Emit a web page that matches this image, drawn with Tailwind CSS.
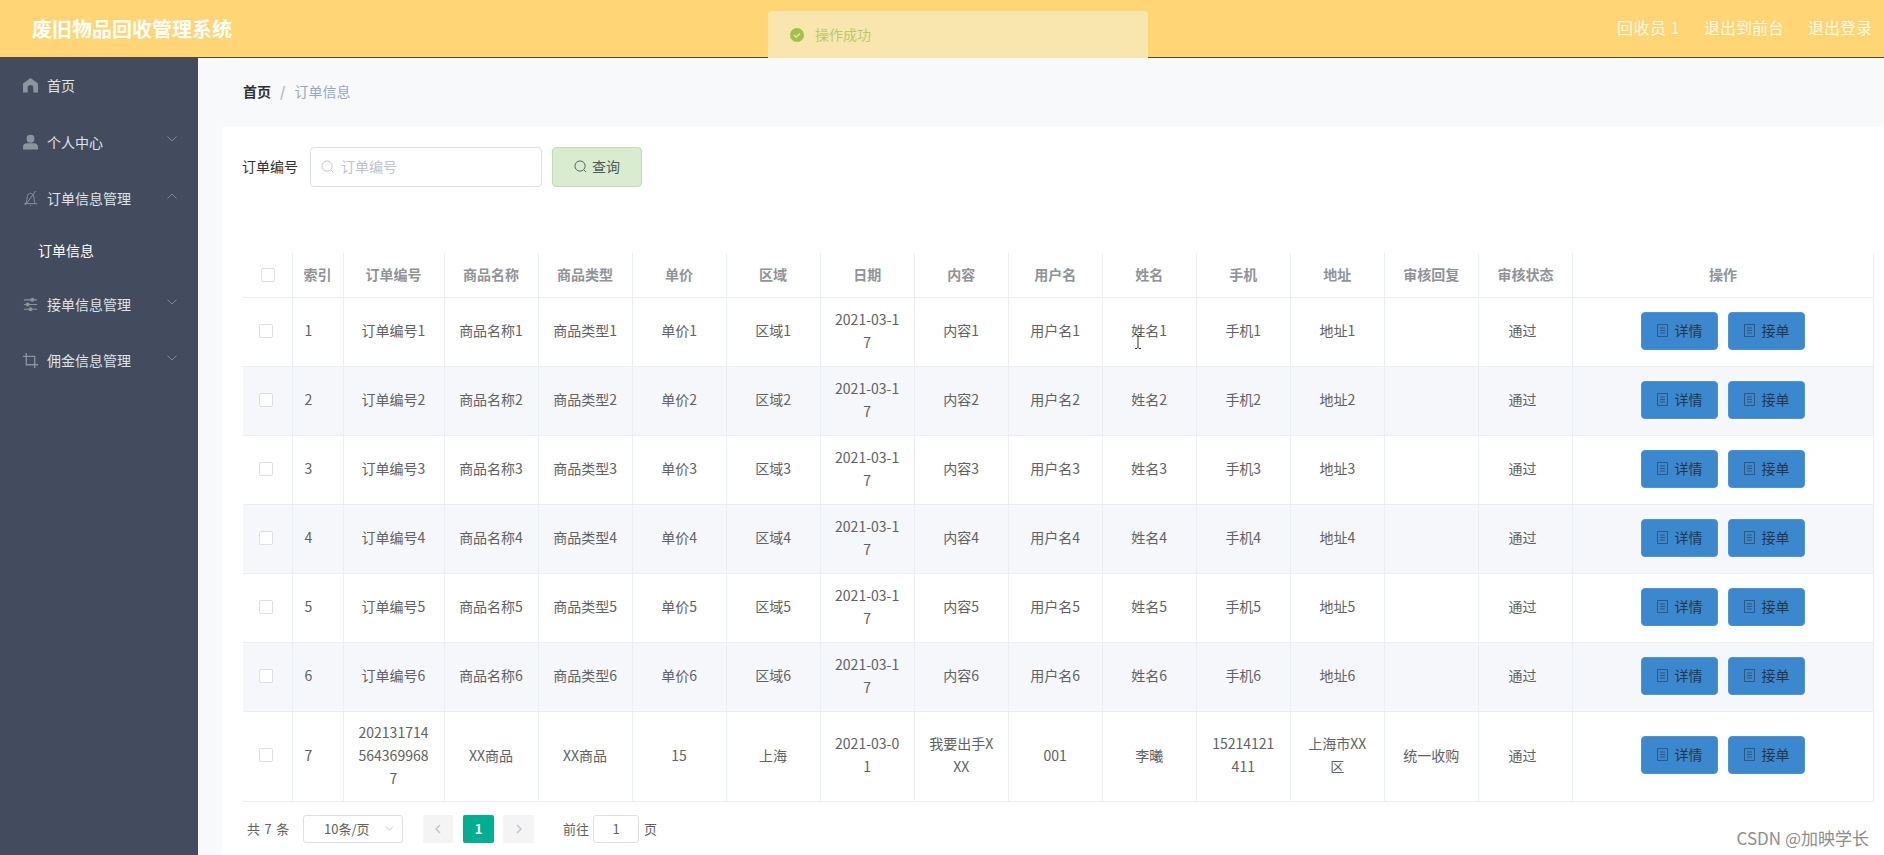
<!doctype html>
<html lang="zh">
<head>
<meta charset="utf-8" />
<title>废旧物品回收管理系统</title>
<script src="https://cdn.jsdelivr.net/npm/@tailwindcss/browser@4"></script>
</head>
<body class="w-[1884px] h-[855px] overflow-hidden relative bg-[#f8f9fb] font-['Noto_Sans_CJK_SC','Noto_Sans',sans-serif] text-[14px] text-[#606266]">
  <!-- top bar -->
  <header class="h-[58px] bg-[#ffd575] border-b border-[#5c4a26] flex items-center justify-between pl-[32px] pr-[12px]">
    <h1 class="text-[20px] font-bold text-white">废旧物品回收管理系统</h1>
    <div class="flex gap-[24px] text-[16px] text-[#fff8e6] pb-[4px]">
      <span class="tracking-[0.5px]">回收员 1</span>
      <span>退出到前台</span>
      <span>退出登录</span>
    </div>
  </header>

  <div class="flex h-[797px]">
    <!-- sidebar -->
    <aside class="w-[198px] shrink-0 bg-[#434c5e] text-[#dfe3e8]">
      <div class="h-[56px] flex items-center pl-[23px] pb-[2px]">
        <svg class="w-[15px] h-[16px] mr-[9px] text-[#8d939f]" viewBox="0 0 16 16" fill="currentColor"><path d="M8 .5 0 6.500V16h5v-5a3 3 0 0 1 6 0v5h5V6.500z"/></svg>
        <span>首页</span>
      </div>
      <div class="h-[57px] flex items-center pl-[23px] pb-[1px] relative">
        <svg class="w-[15px] h-[16px] mr-[9px] text-[#8d939f]" viewBox="0 0 16 16" fill="currentColor"><circle cx="8" cy="4.500" r="4.200"/><path d="M0 16v-3c0-2.500 2-3.800 4-3.800h8c2 0 4 1.300 4 3.800v3z"/></svg>
        <span>个人中心</span>
        <svg class="absolute left-[167px] top-[22px] w-[10px] h-[6px] text-[#7f8694]" viewBox="0 0 10 6" fill="none" stroke="currentColor"><path d="m.5.500 4.500 4.500 4.500-4.500"/></svg>
      </div>
      <div class="h-[56px] flex items-center pl-[23px] pb-[2px] relative">
        <svg class="w-[15px] h-[17px] mr-[9px] text-[#8d939f]" viewBox="0 0 16 17" fill="none" stroke="currentColor"><path d="M1 14h14M3 14c1-2 1-4 1.500-7C5 4 6.500 3 8 3s3 1 3.500 4c.5 3 .5 5 1.500 7M2.500 15.500 13.500.5M7.500 16h1"/></svg>
        <span>订单信息管理</span>
        <svg class="absolute left-[167px] top-[22px] w-[10px] h-[6px] text-[#7f8694]" viewBox="0 0 10 6" fill="none" stroke="currentColor"><path d="m.5 5.500 4.500-4.500 4.500 4.500"/></svg>
      </div>
      <div class="h-[50px] flex items-center pl-[38px] pb-[4px] text-white">订单信息</div>
      <div class="h-[56px] flex items-center pl-[23px] pb-[2px] relative">
        <svg class="w-[15px] h-[15px] mr-[9px] text-[#8d939f]" viewBox="0 0 16 16" fill="none" stroke="currentColor" stroke-width="1.200"><path d="M1 3h14M1 8h14M1 13h14"/><circle cx="10" cy="3" r="1.500" fill="currentColor"/><circle cx="5" cy="8" r="1.500" fill="currentColor"/><circle cx="8" cy="13" r="1.500" fill="currentColor"/></svg>
        <span>接单信息管理</span>
        <svg class="absolute left-[167px] top-[22px] w-[10px] h-[6px] text-[#7f8694]" viewBox="0 0 10 6" fill="none" stroke="currentColor"><path d="m.5.500 4.500 4.500 4.500-4.500"/></svg>
      </div>
      <div class="h-[56px] flex items-center pl-[23px] pb-[2px] relative">
        <svg class="w-[15px] h-[15px] mr-[9px] text-[#8d939f]" viewBox="0 0 16 16" fill="none" stroke="currentColor" stroke-width="1.400"><path d="M3.500 0v12.500H16M0 3.500h12.500V16"/></svg>
        <span>佣金信息管理</span>
        <svg class="absolute left-[167px] top-[22px] w-[10px] h-[6px] text-[#7f8694]" viewBox="0 0 10 6" fill="none" stroke="currentColor"><path d="m.5.500 4.500 4.500 4.500-4.500"/></svg>
      </div>
    </aside>

    <!-- content -->
    <main class="flex-1 flex flex-col pl-[24px]">
      <nav class="h-[69px] shrink-0 flex items-center pl-[21px] pb-[2px]">
        <span class="font-bold text-[#303133]">首页</span>
        <span class="mx-[9px] text-[#b4b9c2] font-bold">/</span>
        <span class="text-[#97a8be]">订单信息</span>
      </nav>
      <section class="flex-1 bg-white pl-[21px] pr-[10px] pt-[20px]">
        <form class="flex items-center h-[40px]">
          <label class="w-[67px] text-[#303133] pb-[2px] -ml-[1px] mr-[1px]">订单编号</label>
          <div class="w-[232px] h-[40px] border border-[#dcdfe6] rounded-[4px] flex items-center pl-[10px] pb-[2px] text-[#c0c4cc]">
            <svg class="w-[13px] h-[13px] mr-[7px]" viewBox="0 0 14 14" fill="none" stroke="currentColor"><circle cx="6.500" cy="6.500" r="5.500"/><path d="m10.500 10.500 2.500 2.500"/></svg>
            <span>订单编号</span>
          </div>
          <button type="button" class="ml-[10px] w-[90px] h-[40px] bg-[#d9ecd0] border border-[#c3dcb4] rounded-[4px] flex items-center justify-center gap-[5px] pb-[2px] text-[#4f5a58]">
            <svg class="w-[13px] h-[13px]" viewBox="0 0 14 14" fill="none" stroke="currentColor"><circle cx="6.500" cy="6.500" r="5.500"/><path d="m10.500 10.500 2.500 2.500"/></svg>
            <span>查询</span>
          </button>
        </form>

        <table class="mt-[66px] w-[1631px] table-fixed border-collapse text-center">
          <colgroup>
            <col class="w-[49px]" /><col class="w-[51px]" /><col class="w-[101px]" />
            <col /><col /><col /><col /><col /><col /><col /><col /><col /><col /><col /><col />
            <col class="w-[301px]" />
          </colgroup>
          <thead>
            <tr class="h-[44px] border-b border-[#ebeef5] text-[#909399] text-[14px]" id="head"></tr>
          </thead>
          <tbody id="rows"></tbody>
        </table>

        <div class="mt-[13px] flex items-center h-[28px] text-[13px]">
          <span class="ml-[4px] w-[56px] tracking-[0.8px]">共 7 条</span>
          <div class="w-[100px] h-[28px] border border-[#dcdfe6] rounded-[3px] flex items-center justify-between pl-[20px] pr-[8px]">
            <span>10条/页</span>
            <svg class="w-[9px] h-[5px] text-[#c0c4cc]" viewBox="0 0 10 6" fill="none" stroke="currentColor"><path d="m.5.500 4.500 4.500 4.500-4.500"/></svg>
          </div>
          <div class="ml-[20px] w-[30px] h-[28px] bg-[#f4f4f5] rounded-[2px] flex items-center justify-center">
            <svg class="w-[6px] h-[10px] text-[#c0c4cc]" viewBox="0 0 6 10" fill="none" stroke="currentColor" stroke-width="1.500"><path d="M5 1 1 5l4 4"/></svg>
          </div>
          <div class="ml-[10px] w-[31px] h-[28px] bg-[#00ae94] rounded-[2px] flex items-center justify-center text-white font-bold">1</div>
          <div class="ml-[9px] w-[31px] h-[28px] bg-[#f4f4f5] rounded-[2px] flex items-center justify-center">
            <svg class="w-[6px] h-[10px] text-[#c0c4cc]" viewBox="0 0 6 10" fill="none" stroke="currentColor" stroke-width="1.500"><path d="m1 1 4 4-4 4"/></svg>
          </div>
          <span class="ml-[29px] w-[30px]">前往</span>
          <div class="w-[46px] h-[28px] border border-[#dcdfe6] rounded-[3px] flex items-center justify-center">1</div>
          <span class="ml-[5px]">页</span>
        </div>
      </section>
    </main>
  </div>

  <!-- success toast -->
  <div class="absolute left-[768px] top-[11px] w-[380px] h-[47px] bg-[#f9e6ae] rounded-t-[4px] flex items-center pl-[22px] text-[#b9c86e]">
    <svg class="w-[14px] h-[14px] mr-[11px]" viewBox="0 0 14 14"><circle cx="7" cy="7" r="7" fill="#a3c04e"/><path d="m4 7 2.200 2.200L10 5.500" fill="none" stroke="#f9e6ae" stroke-width="1.300"/></svg>
    <span>操作成功</span>
  </div>

  <!-- text cursor in the capture -->
  <svg class="absolute left-[1134px] top-[334px] w-[8px] h-[15px] text-[#333]" viewBox="0 0 8 15" fill="none" stroke="currentColor"><path d="M1 .5h2l1 1 1-1h2M4 1.500v12M1 14.500h2l1-1 1 1h2"/></svg>

  <div class="absolute right-[15px] top-[826px] text-[17px] leading-[24px] text-[#8e8e8e]">CSDN @加映学长</div>

  <script>
    const heads = ["", "索引", "订单编号", "商品名称", "商品类型", "单价", "区域", "日期", "内容", "用户名", "姓名", "手机", "地址", "审核回复", "审核状态", "操作"];
    const checkbox = (cls) => `<span class="block w-[14px] h-[14px] border border-[#dcdfe6] rounded-[2px] bg-white ${cls}"></span>`;
    const docIcon = `<svg class="w-[11px] h-[13px]" viewBox="0 0 11 13" fill="none" stroke="#2f4a68" stroke-width="0.800"><path d="M.5.5h10v12H.5zM3 4h5M3 6.500h5M3 9h5"/></svg>`;
    const btn = (label) => `<button type="button" class="w-[77px] h-[38px] bg-[#3c88cf] border border-[#4f93d3] rounded-[4px] flex items-center justify-center gap-[7px] pb-[1px] text-[#263648]">${docIcon}<span>${label}</span></button>`;

    document.getElementById("head").innerHTML = heads.map((h, i) => {
      if (i === 0) return `<th class="border-r border-[#ebeef5]">${checkbox("ml-[18px]")}</th>`;
      if (i === 1) return `<th class="border-r border-[#ebeef5] text-left pl-[11px] font-bold">${h}</th>`;
      return `<th class="border-r border-[#ebeef5] font-bold">${h}</th>`;
    }).join("");

    const rows = [];
    for (let n = 1; n <= 6; n++) {
      rows.push([n, `订单编号${n}`, `商品名称${n}`, `商品类型${n}`, `单价${n}`, `区域${n}`, "2021-03-1<br>7", `内容${n}`, `用户名${n}`, `姓名${n}`, `手机${n}`, `地址${n}`, "", "通过"]);
    }
    rows.push([7, "202131714<br>564369968<br>7", "XX商品", "XX商品", "15", "上海", "2021-03-0<br>1", "我要出手X<br>XX", "001", "李曦", "15214121<br>411", "上海市XX<br>区", "统一收购", "通过"]);

    document.getElementById("rows").innerHTML = rows.map((r, i) => {
      const last = i === rows.length - 1;
      const tr = `${last ? "h-[90px]" : "h-[69px]"} ${i % 2 ? "bg-[#f5f7fa]" : "bg-white"} border-b border-[#ebeef5] leading-[23px]`;
      const cells = r.map((c, j) => {
        if (j === 0) return `<td class="border-r border-[#ebeef5] text-left pl-[12px] pb-[2px]">${c}</td>`;
        if (j === 13) return `<td class="border-r border-[#ebeef5] pr-[6px] pb-[2px]">${c}</td>`;
        return `<td class="border-r border-[#ebeef5] pb-[2px]">${c}</td>`;
      }).join("");
      return `<tr class="${tr}"><td class="border-r border-[#ebeef5] pb-[2px]">${checkbox("ml-[16px]")}</td>${cells}<td class="border-r border-[#ebeef5] pb-[2px]"><div class="flex justify-center gap-[10px]">${btn("详情")}${btn("接单")}</div></td></tr>`;
    }).join("");
  </script>
</body>
</html>
